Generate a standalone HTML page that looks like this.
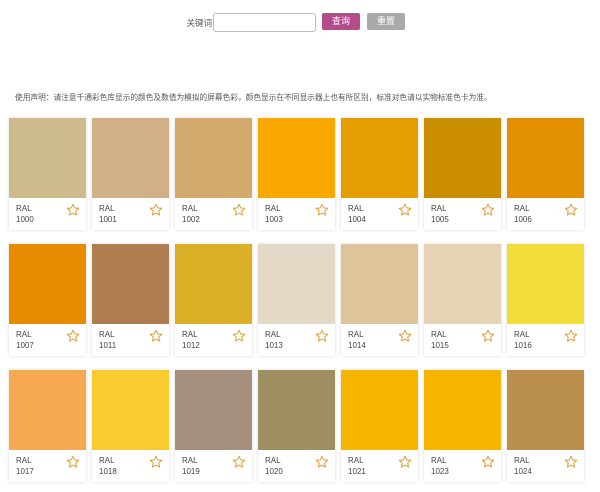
<!DOCTYPE html>
<html><head><meta charset="utf-8"><style>
*{margin:0;padding:0;box-sizing:border-box}
body{width:600px;height:492px;background:#fff;font-family:"Liberation Sans","Noto Sans CJK SC",sans-serif;position:relative;overflow:hidden}
.lbl{position:absolute;left:170px;width:42px;text-align:right;top:17px;font-size:8.5px;color:#555}
.inp{position:absolute;left:213px;top:13px;width:103px;height:19px;border:1px solid #bbb;border-radius:3px}
.b1{position:absolute;left:322px;top:13px;width:38px;height:17px;background:#b44c8c;border-radius:2px;color:#fff;font-size:9px;text-align:center;line-height:17px}
.b2{position:absolute;left:367px;top:13px;width:38px;height:17px;background:#a9a9a9;border-radius:2px;color:#fff;font-size:9px;text-align:center;line-height:17px}
.note{position:absolute;left:15px;top:92px;font-size:7.7px;color:#555;white-space:nowrap}
.card{position:absolute;width:77px;height:112px;background:#fff;box-shadow:0 0 3px rgba(0,0,0,.15)}
.sw{height:80px}
.t{position:absolute;left:7px;top:85px;font-size:8px;line-height:11px;color:#444}
.card svg{position:absolute;left:57px;top:85px}
</style></head><body>
<div class="lbl">关键词</div><div class="inp"></div>
<div class="b1">查询</div><div class="b2">重置</div>
<div class="note">使用声明：请注意千通彩色库显示的颜色及数值为模拟的屏幕色彩，颜色显示在不同显示器上也有所区别，标准对色请以实物标准色卡为准。</div>
<div id="g"></div>
<script>
var c=[["1000","#cdbb8c"],["1001","#d1b088"],["1002","#d2aa6e"],["1003","#f9a800"],["1004","#e49e00"],["1005","#cb8e00"],["1006","#e29000"],
["1007","#e88b00"],["1011","#af7d4f"],["1012","#dbb026"],["1013","#e3d9c6"],["1014","#ddc49a"],["1015","#e6d2b5"],["1016","#f1dd38"],
["1017","#f6a950"],["1018","#facb2e"],["1019","#a4917d"],["1020","#9e8f63"],["1021","#f6b600"],["1023","#f7b500"],["1024","#ba8f4c"]];
var h="";c.forEach(function(v,i){var x=9+83*(i%7),y=118+126*Math.floor(i/7);
h+='<div class="card" style="left:'+x+'px;top:'+y+'px"><div class="sw" style="background:'+v[1]+'"></div><div class="t">RAL<br>'+v[0]+'</div><svg width="14" height="14" viewBox="0 0 24 24"><path d="M12 2l2.9 6.3 6.9.8-5.1 4.7 1.4 6.8L12 17.2 5.9 20.6l1.4-6.8L2.2 9.1l6.9-.8z" fill="none" stroke="#e0a040" stroke-width="1.8" stroke-linejoin="round"/></svg></div>';});
document.getElementById("g").innerHTML=h;
</script>
</body></html>
